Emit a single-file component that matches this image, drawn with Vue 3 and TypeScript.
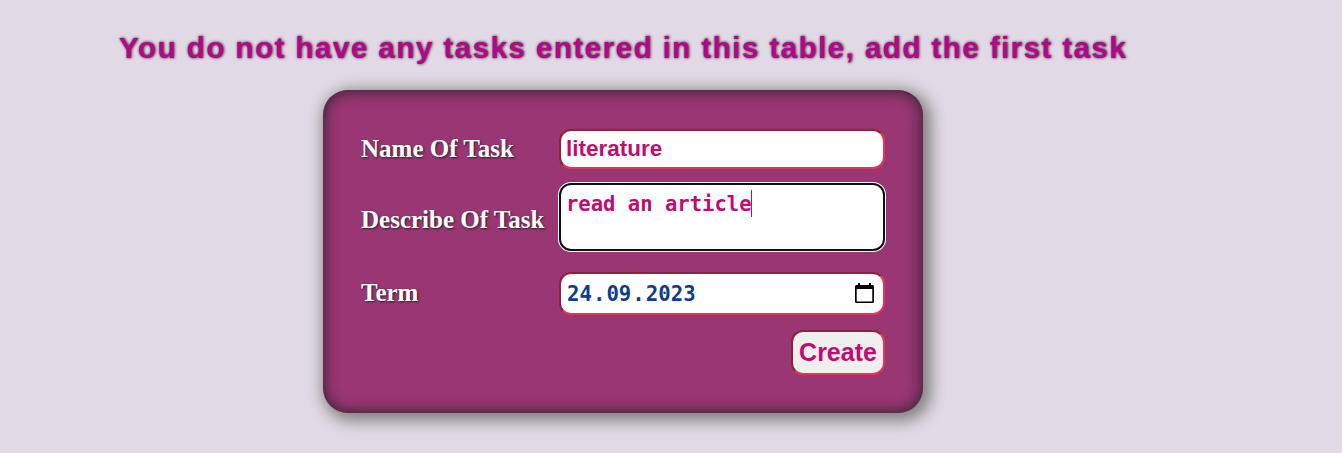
<script setup lang="ts">
import { ref } from 'vue'

const taskName = ref<string>('literature')
const description = ref<string>('read an article')
const term = { day: '24', month: '09', year: '2023' }
</script>

<template>
  <main class="page">
    <h1 class="title">You do not have any tasks entered in this table, add the first task</h1>
    <form class="card" @submit.prevent>
      <label class="label" for="name">Name Of Task</label>
      <input id="name" v-model="taskName" class="field name" type="text" />
      <span class="label">Describe Of Task</span>
      <div class="field describe"><span>{{ description }}</span><i class="caret"></i></div>
      <span class="label">Term</span>
      <div class="field date">
        <span class="value"><span class="part">{{ term.day }}</span>.<span class="part">{{ term.month }}</span>.<span class="part">{{ term.year }}</span></span>
        <svg class="calendar" viewBox="0 0 19 21" width="19" height="21">
          <path d="M3 0h2v2h9V0h2v2h1.500A1.500 1.500 0 0 1 19 3.500V18.500A1.500 1.500 0 0 1 17.500 20H1.500A1.500 1.500 0 0 1 0 18.500V3.500A1.500 1.500 0 0 1 1.500 2H3zM1.700 6V18.500H17.300V6z" fill="#000" fill-rule="evenodd" />
        </svg>
      </div>
      <button class="create" type="submit">Create</button>
    </form>
  </main>
</template>

<style>
body {
  background: #e1d9e5;
}
</style>

<style scoped>
.page {
  box-sizing: border-box;
  width: 1342px;
  height: 453px;
  padding-top: 28px;
  overflow: hidden;
  background: #e1d9e5;
}

.title {
  width: 1246px;
  height: 40px;
  margin: 0 0 22px;
  color: #b4058c;
  font: bold 30px/40px "Liberation Sans", Arial, sans-serif;
  letter-spacing: 1.25px;
  text-align: center;
  white-space: nowrap;
  text-shadow: 0.5px 0 3px #222;
}

.card {
  box-sizing: border-box;
  display: grid;
  grid-template-columns: 198px 326px;
  grid-template-rows: 40px 75px 43px 46px;
  row-gap: 14px;
  width: 600px;
  height: 323px;
  margin-left: 323px;
  padding: 39px 38px;
  border-radius: 25px;
  background: #993673;
  box-shadow: 4px 4px 15px 4px #808080, inset 0 0 15px #222;
}

.label {
  align-self: center;
  padding-bottom: 2px;
  color: #fff;
  font: bold 25px/29px "Liberation Serif", "Times New Roman", serif;
  white-space: nowrap;
  text-shadow: 1px 1px 2px #222;
}

.field {
  box-sizing: border-box;
  width: 326px;
  margin: 0;
  border: 2px solid;
  border-color: #8f2238 #e13753 #e13753 #8f2238;
  border-radius: 12px;
  outline: none;
  background: #fff;
  color: #c30b6f;
}

.name {
  padding: 0 5px;
  font: bold 22.5px/26px "Liberation Sans", Arial, sans-serif;
}

.describe {
  display: flex;
  align-items: flex-start;
  height: 68px;
  padding: 6px 5px;
  border-color: #101010;
  box-shadow: 0 0 0 1px #fff;
  font: bold 20.55px/27px "DejaVu Sans Mono", monospace;
}

.caret {
  width: 1px;
  height: 27px;
  margin: -1px 0 0 -1px;
  background: #c30b6f;
}

.date {
  display: flex;
  align-items: center;
  justify-content: space-between;
  padding: 0 9px 0 5px;
  color: #0b3d91;
  font: bold 20.7px/27px "DejaVu Sans Mono", monospace;
}

.value {
  padding-top: 2px;
}

.part {
  padding: 0 1px;
}

.create {
  grid-column: 2;
  align-self: end;
  justify-self: end;
  box-sizing: border-box;
  width: 94px;
  height: 45px;
  padding: 0;
  border: 2px solid;
  border-color: #8f2238 #e13753 #e13753 #8f2238;
  border-radius: 12px;
  background: #efefef;
  color: #c30b6f;
  font: bold 25px/29px "Liberation Sans", Arial, sans-serif;
}
</style>
